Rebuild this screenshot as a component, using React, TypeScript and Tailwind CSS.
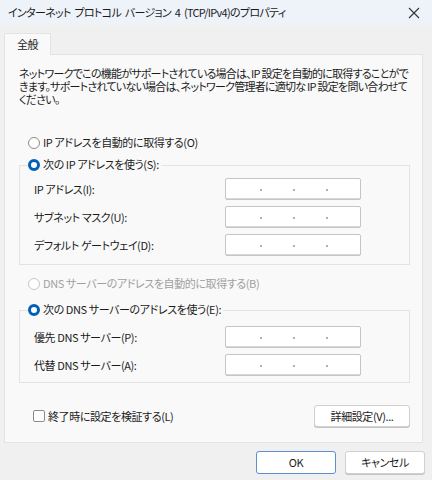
import React from "react";

const FONT = "font-['Noto_Sans_CJK_JP','Noto_Sans',sans-serif] [font-feature-settings:'palt'] tracking-[-0.4px]";

function Radio({ checked, disabled, label }: { checked?: boolean; disabled?: boolean; label: string }) {
    return (
        <div className={"flex items-center gap-[3px] " + (disabled ? "text-[#a0a0a0]" : "text-[#1b1b1b]")}>
            {checked ? (
                <span className="w-[12px] h-[12px] rounded-full border-[3.5px] border-[#005fb8] bg-white" />
            ) : (
                <span
                    className={
                        "w-[12px] h-[12px] rounded-full border bg-white " +
                        (disabled ? "border-[#c6c6c6]" : "border-[#8b8b8b]")
                    }
                />
            )}
            <span>{label}</span>
        </div>
    );
}

function IpInput() {
    return (
        <div className="relative w-[136px] h-[22px] bg-white border border-[#c5c5c5] rounded-[2px] shadow-[inset_0_-1px_0_#d8d8d8]">
            {[34, 67, 100].map((x) => (
                <span
                    key={x}
                    className="absolute top-[10px] w-[2px] h-[2px] rounded-full bg-[#8d9aa8]"
                    style={{ left: x }}
                />
            ))}
        </div>
    );
}

function FieldRow({ label }: { label: string }) {
    return (
        <div className="flex items-center h-[22px]">
            <span className="w-[191px]">{label}</span>
            <IpInput />
        </div>
    );
}

export default function App() {
    return (
        <div className={"w-[432px] h-[480px] bg-[#f0f0f0] text-[11px] leading-[13px] text-[#1b1b1b] " + FONT}>
            {/* Title bar */}
            <div className="h-[25px] bg-[#eef2f9] flex items-center justify-between pl-[8px] pr-[12px]">
                <span className="text-[11px] tracking-[-0.7px] [word-spacing:2px]">インターネット プロトコル バージョン 4 (TCP/IPv4)のプロパティ</span>
                <svg width="12" height="12" viewBox="0 0 12 12" className="mt-[1px]">
                    <path d="M1 1 L11 11 M11 1 L1 11" stroke="#333" strokeWidth="1.1" />
                </svg>
            </div>

            {/* Tab */}
            <div className="mt-[8px] ml-[4px] w-[47px] h-[22px] bg-[#f9f9f9] border border-b-0 border-[#e3e3e3] flex items-center justify-center relative z-10 -mb-[1px]">
                全般
            </div>

            {/* Panel */}
            <div className="ml-[4px] w-[419px] h-[389px] bg-[#f9f9f9] border border-[#e3e3e3] pl-[14px] pr-[12px] pt-[12px]">
                <p className="leading-[13px] tracking-[-0.75px]">
                    ネットワークでこの機能がサポートされている場合は、IP 設定を自動的に取得することができます。サポートされていない場合は、ネットワーク管理者に適切な IP 設定を問い合わせてください。
                </p>

                <div className="mt-[30px] pl-[9px]">
                    <Radio label="IP アドレスを自動的に取得する(O)" />
                </div>

                {/* Static IP group */}
                <div className="mt-[16px] relative border border-[#e3e3e3] h-[100px] pl-[14px] pt-[12px] flex flex-col gap-[6px]">
                    <div className="absolute -top-[8px] left-[8px] bg-[#f9f9f9] pr-[2px]">
                        <Radio checked label="次の IP アドレスを使う(S):" />
                    </div>
                    <FieldRow label="IP アドレス(I):" />
                    <FieldRow label="サブネット マスク(U):" />
                    <FieldRow label="デフォルト ゲートウェイ(D):" />
                </div>

                <div className="mt-[12px] pl-[9px]">
                    <Radio disabled label="DNS サーバーのアドレスを自動的に取得する(B)" />
                </div>

                {/* DNS group */}
                <div className="mt-[20px] relative border border-[#e3e3e3] h-[73px] pl-[14px] pt-[15px] flex flex-col gap-[6px]">
                    <div className="absolute -top-[8px] left-[8px] bg-[#f9f9f9] pr-[2px]">
                        <Radio checked label="次の DNS サーバーのアドレスを使う(E):" />
                    </div>
                    <FieldRow label="優先 DNS サーバー(P):" />
                    <FieldRow label="代替 DNS サーバー(A):" />
                </div>

                <div className="mt-[22px] flex items-center justify-between pl-[14px]">
                    <div className="flex items-center gap-[3px]">
                        <span className="w-[12px] h-[12px] rounded-[2px] border border-[#8b8b8b] bg-white" />
                        <span>終了時に設定を検証する(L)</span>
                    </div>
                    <button className="w-[96px] h-[22px] bg-white border border-[#d0d0d0] rounded-[3px] shadow-[0_1px_0_#c4c4c4]">
                        詳細設定(V)...
                    </button>
                </div>
            </div>

            {/* Footer buttons */}
            <div className="mt-[8px] flex justify-end gap-[9px] pr-[7px]">
                <button className="w-[80px] h-[23px] bg-white border-[1.5px] border-[#5a8fd0] rounded-[3px]">
                    OK
                </button>
                <button className="w-[80px] h-[23px] bg-white border border-[#d0d0d0] rounded-[3px] shadow-[0_1px_0_#c4c4c4]">
                    キャンセル
                </button>
            </div>
        </div>
    );
}
